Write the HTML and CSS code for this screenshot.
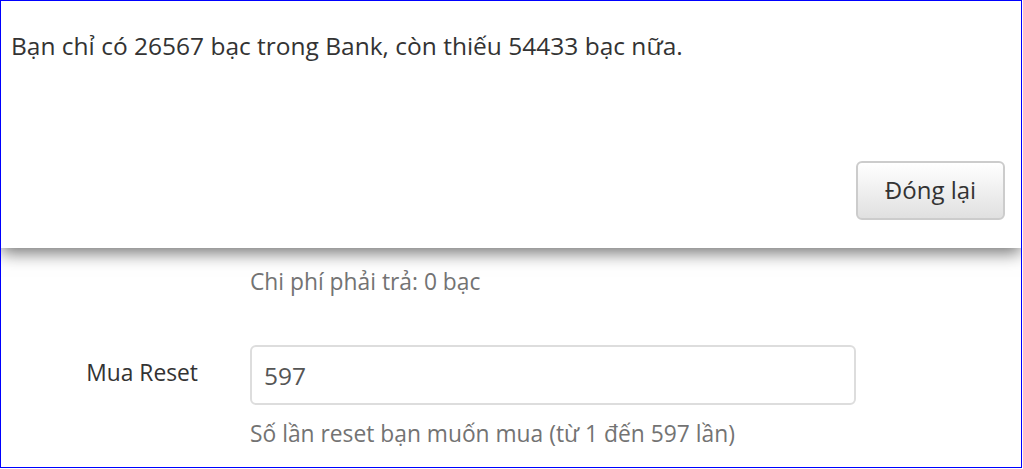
FILE: index.html
```html
<!DOCTYPE html>
<html lang="vi">
<head>
    <meta charset="UTF-8">
    <meta name="viewport" content="width=device-width, initial-scale=1.0">
    <title>Mua Reset</title>
    <link rel="stylesheet" href="styles.css">
</head>
<body>
    <div class="frame">
        <form class="form-reset">
            <div class="form-row">
                <div></div>
                <p class="help">Chi phí phải trả: 0 bạc</p>
            </div>
            <div class="form-row">
                <label for="soLan">Mua Reset</label>
                <div>
                    <input id="soLan" type="text" value="597">
                    <p class="help">Số lần reset bạn muốn mua (từ 1 đến 597 lần)</p>
                </div>
            </div>
        </form>

        <!-- Hộp thông báo -->
        <div class="modal">
            <div class="modal-body">Bạn chỉ có 26567 bạc trong Bank, còn thiếu 54433 bạc nữa.</div>
            <div class="modal-footer">
                <button type="button">Đóng lại</button>
            </div>
        </div>
    </div>
</body>
</html>
```

FILE: styles.css
```css
* {
    box-sizing: border-box;
    margin: 0;
    padding: 0;
}
body {
    font-family: "Open Sans", "Noto Sans", Arial, sans-serif;
    font-size: 22.8px;
    line-height: 1.42;
    color: #333;
    background-color: #fff;
}
.frame {
    position: relative;
    width: 1022px;
    height: 468px;
    border: 1px solid #0000ff;
    overflow: hidden;
}
.form-reset {
    padding-top: 265px;
}
.form-row {
    display: grid;
    grid-template-columns: 249px 606px;
    margin-bottom: 47px;
}
.form-row label {
    justify-self: end;
    padding-right: 52px;
    padding-top: 12px;
}
.help {
    color: #737373;
}
input {
    display: block;
    width: 100%;
    height: 60px;
    padding: 0 12px;
    margin-bottom: 13px;
    font: inherit;
    font-size: 24.5px;
    color: #555;
    border: 2px solid #ddd;
    border-radius: 6px;
    outline: none;
}
.modal {
    position: absolute;
    top: 0;
    left: 0;
    right: 0;
    height: 247px;
    background-color: #fff;
    box-shadow: 0 5px 16px rgba(0, 0, 0, 0.55);
}
.modal-body {
    padding: 28px 10px 0;
    height: 160px;
    font-size: 24.5px;
}
.modal-footer {
    text-align: right;
    padding-right: 16px;
}
button {
    width: 149px;
    height: 59px;
    font: inherit;
    font-size: 24px;
    color: #333;
    background: linear-gradient(#fff, #e0e0e0);
    border: 2px solid #ccc;
    border-radius: 6px;
    cursor: pointer;
}
```
